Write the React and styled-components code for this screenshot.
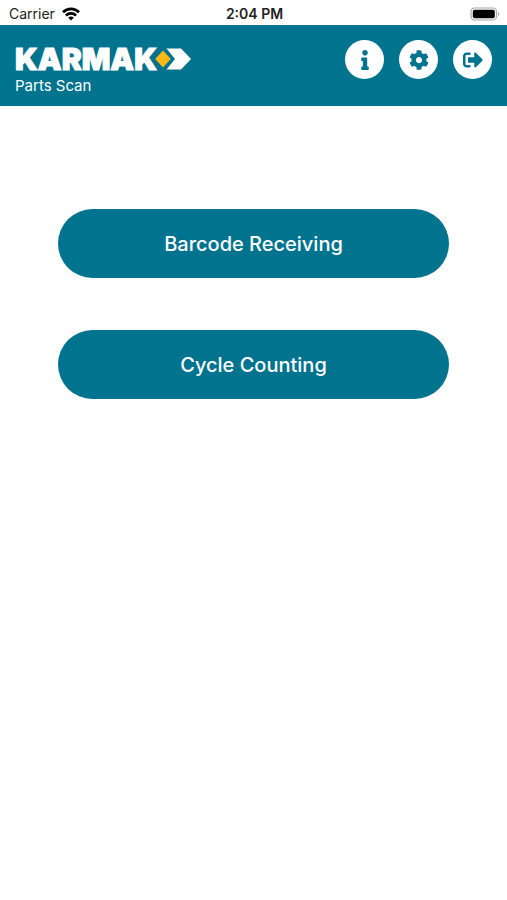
import styled, { createGlobalStyle } from "styled-components";
import { FaInfo, FaCog, FaSignOutAlt } from "react-icons/fa";

const actions = [
  { label: "Info", Icon: FaInfo },
  { label: "Settings", Icon: FaCog },
  { label: "Log out", Icon: FaSignOutAlt },
];

const WifiIcon = () => (
  <svg width="18" height="14" viewBox="0 0 18 14" fill="none" stroke="#000" strokeWidth="2.6" aria-hidden="true">
    <path d="M1 5.2C5.6.7 12.4.7 17 5.2" />
    <path d="M3.9 8.5c2.9-2.8 7.3-2.8 10.2 0" />
    <path d="M6.2 10.7c1.5-1.5 4.1-1.5 5.6 0L9 13.6z" fill="#000" stroke="none" />
  </svg>
);

const BatteryIcon = () => (
  <svg width="30" height="14" viewBox="0 0 30 14" aria-hidden="true">
    <rect x="1" y="1" width="25.5" height="12" rx="3.6" fill="#fff" stroke="#a8a8a8" strokeWidth="1.2" />
    <rect x="2.8" y="2.8" width="22" height="8.4" rx="2" fill="#000" />
    <path d="M28 5c1.8.6 1.8 3.4 0 4z" fill="#a8a8a8" />
  </svg>
);

const LogoMark = () => (
  <svg width="38" height="22" viewBox="0 0 38 22" aria-hidden="true">
    <path d="M10 0L21 11 10 22-1 11z" fill="#00738f" />
    <path d="M13.500.5H28L38 11 28 21.500H13.500L22 11z" fill="#fff" />
    <path d="M10 2.500l7.800 8.500-7.800 8.500L2.200 11z" fill="#fdb913" />
  </svg>
);

const App = () => {
  return (
    <Screen>
      <GlobalStyle />
      <StatusBar>
        <Carrier>
          Carrier
          <WifiIcon />
        </Carrier>
        <Time>2:04 PM</Time>
        <Battery>
          <BatteryIcon />
        </Battery>
      </StatusBar>

      <Header>
        <Brand>
          <Logo>
            KARMAK
            <Mark>
              <LogoMark />
            </Mark>
          </Logo>
          <Product>Parts Scan</Product>
        </Brand>
        <Actions>
          {actions.map(({ label, Icon }) => (
            <RoundButton key={label} aria-label={label}>
              <Icon size={20} />
            </RoundButton>
          ))}
        </Actions>
      </Header>

      <Menu>
        <MenuButton>Barcode Receiving</MenuButton>
        <MenuButton>Cycle Counting</MenuButton>
      </Menu>
    </Screen>
  );
};

export default App;

const GlobalStyle = createGlobalStyle`
  * {
    box-sizing: border-box;
  }
  body {
    margin: 0;
    background: #fff;
    font-family: Inter, sans-serif;
  }
`;

const Screen = styled.div`
  min-height: 100vh;
`;

const StatusBar = styled.div`
  display: grid;
  grid-template-columns: 1fr auto 1fr;
  align-items: center;
  height: 25px;
  padding: 2px 7px 0 9px;
  font-size: 14px;
  color: #222;
`;

const Carrier = styled.div`
  display: flex;
  align-items: center;
  gap: 7px;
`;

const Time = styled.div`
  font-weight: 600;
`;

const Battery = styled.div`
  display: flex;
  justify-content: flex-end;
`;

const Header = styled.header`
  display: flex;
  justify-content: space-between;
  height: 81px;
  padding: 15px;
  background: #00738f;
  color: #fff;
`;

const Brand = styled.div`
  padding-top: 8px;
`;

const Logo = styled.div`
  display: flex;
  align-items: center;
  height: 22px;
  font-size: 30px;
  font-weight: 900;
  line-height: 22px;
  -webkit-text-stroke: 1px #fff;
`;

const Mark = styled.span`
  display: flex;
  margin-left: -4px;
`;

const Product = styled.div`
  margin-top: 8px;
  font-size: 15px;
  line-height: 16px;
`;

const Actions = styled.div`
  display: flex;
  gap: 15px;
`;

const RoundButton = styled.button`
  display: flex;
  align-items: center;
  justify-content: center;
  width: 39px;
  height: 39px;
  padding: 0;
  border: none;
  border-radius: 50%;
  background: #fff;
  color: #00738f;
  cursor: pointer;
`;

const Menu = styled.main`
  display: flex;
  flex-direction: column;
  align-items: center;
  gap: 52px;
  padding: 103px 0;
`;

const MenuButton = styled.button`
  width: 77%;
  height: 69px;
  border: none;
  border-radius: 35px;
  background: #00738f;
  color: #fff;
  font-family: inherit;
  font-size: 20px;
  font-weight: 500;
  cursor: pointer;
`;
